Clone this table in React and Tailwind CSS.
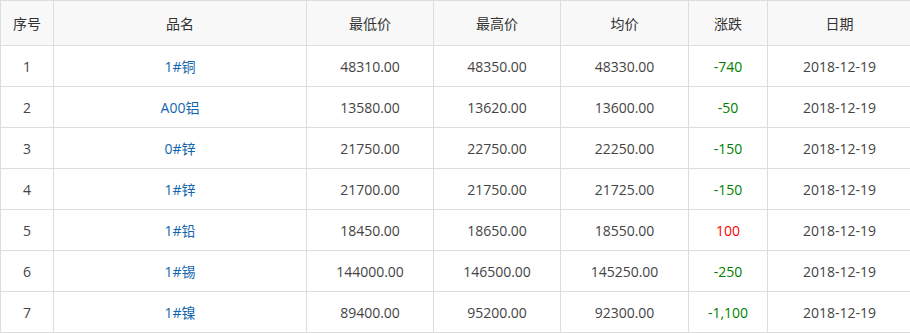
import React from "react";

const ROWS = [
  ["1", "1#铜", "48310.00", "48350.00", "48330.00", "-740", "2018-12-19"],
  ["2", "A00铝", "13580.00", "13620.00", "13600.00", "-50", "2018-12-19"],
  ["3", "0#锌", "21750.00", "22750.00", "22250.00", "-150", "2018-12-19"],
  ["4", "1#锌", "21700.00", "21750.00", "21725.00", "-150", "2018-12-19"],
  ["5", "1#铅", "18450.00", "18650.00", "18550.00", "100", "2018-12-19"],
  ["6", "1#锡", "144000.00", "146500.00", "145250.00", "-250", "2018-12-19"],
  ["7", "1#镍", "89400.00", "95200.00", "92300.00", "-1,100", "2018-12-19"],
];

const HEAD = ["序号", "品名", "最低价", "最高价", "均价", "涨跌", "日期"];
const WIDTHS = ["w-[53px]", "w-[253px]", "w-[127px]", "w-[127px]", "w-[128px]", "w-[79px]", ""];

export default function App() {
  return (
    <div className="w-[912px] bg-white text-[14px] text-[#444] font-['Open_Sans','Noto_Sans_CJK_SC',sans-serif]">
      <table className="w-full table-fixed border-collapse border border-[#dddddd]">
        <thead>
          <tr className="bg-[#f8f8f8] h-[45px]">
            {HEAD.map((h, i) => (
              <th key={h} className={`${WIDTHS[i]} border border-[#dddddd] font-normal text-[#333] text-center`}>
                {h}
              </th>
            ))}
          </tr>
        </thead>
        <tbody>
          {ROWS.map((r) => {
            const chg = r[5];
            const up = !chg.startsWith("-");
            return (
              <tr key={r[0]} className="h-[41px]">
                <td className="border border-[#dddddd] text-center">{r[0]}</td>
                <td className="border border-[#dddddd] text-center text-[#1266ad]">{r[1]}</td>
                <td className="border border-[#dddddd] text-center">{r[2]}</td>
                <td className="border border-[#dddddd] text-center">{r[3]}</td>
                <td className="border border-[#dddddd] text-center">{r[4]}</td>
                <td className={`border border-[#dddddd] text-center ${up ? "text-[#ff0000]" : "text-[#008000]"}`}>{chg}</td>
                <td className="border border-[#dddddd] text-center">{r[6]}</td>
              </tr>
            );
          })}
        </tbody>
      </table>
    </div>
  );
}
